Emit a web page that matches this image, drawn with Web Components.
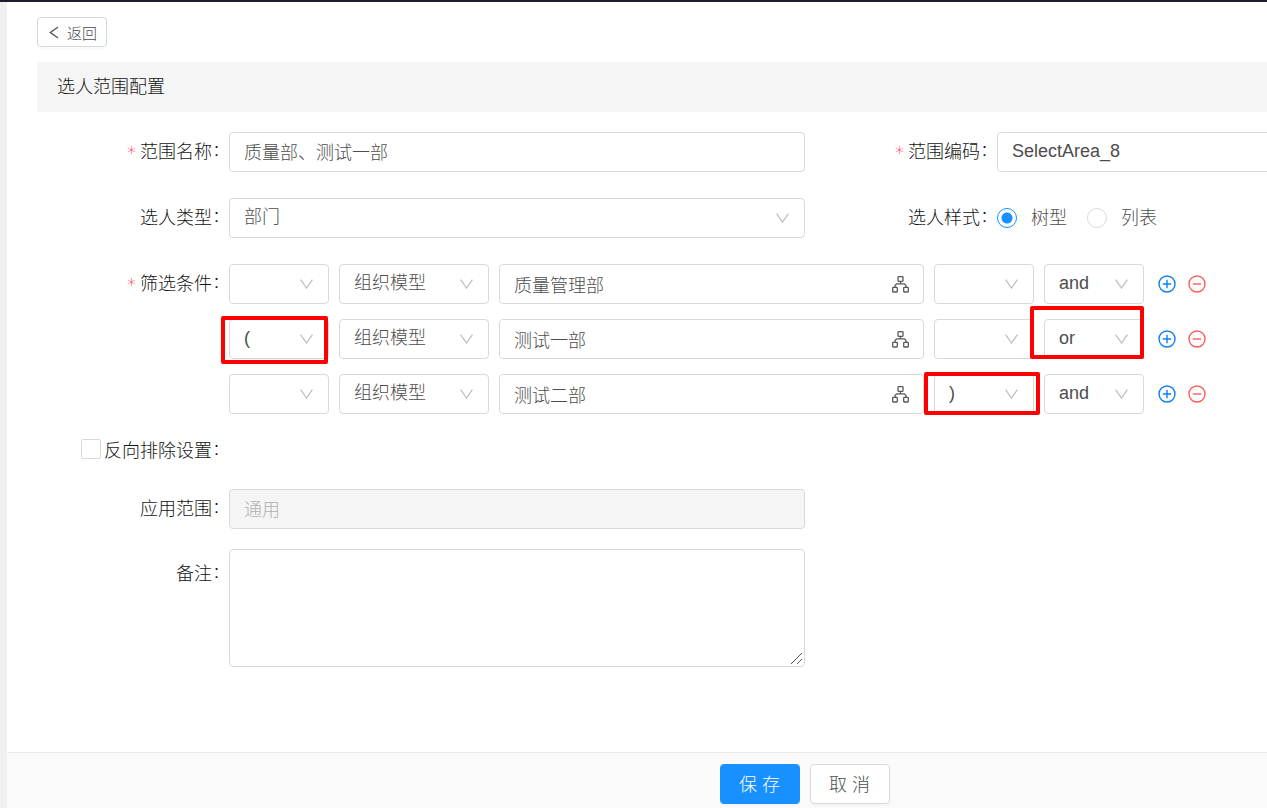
<!DOCTYPE html>
<html lang="zh-CN">
<head>
<meta charset="utf-8">
<meta name="viewport" content="width=device-width, initial-scale=1">
<title>选人范围配置</title>
<style>
  body {
    margin: 0;
    font-family: "Liberation Sans", "Noto Sans CJK SC", sans-serif;
    font-size: 18px;
    font-weight: 300;
    color: #141414;
    background: #fff;
  }
</style>
</head>
<body>
<range-page>
  <back-button slot="top" text="返回"></back-button>
  <section-title slot="top">选人范围配置</section-title>

  <form-row>
    <text-field label="范围名称" value="质量部、测试一部" required></text-field>
    <text-field label="范围编码" value="SelectArea_8" required bleed></text-field>
  </form-row>
  <form-row>
    <select-field label="选人类型" value="部门"></select-field>
    <radio-field label="选人样式" options="树型,列表"></radio-field>
  </form-row>
  <condition-list label="筛选条件" required>
    <condition-item model="组织模型" value="质量管理部" logic="and"></condition-item>
    <condition-item open="(" model="组织模型" value="测试一部" logic="or" mark="open logic"></condition-item>
    <condition-item model="组织模型" value="测试二部" close=")" logic="and" mark="close"></condition-item>
  </condition-list>
  <check-field label="反向排除设置"></check-field>
  <form-row>
    <text-field label="应用范围" value="通用" disabled></text-field>
  </form-row>
  <form-row>
    <area-field label="备注"></area-field>
  </form-row>

  <action-button slot="footer" primary>保 存</action-button>
  <action-button slot="footer">取 消</action-button>
</range-page>

<script>
const base = /* html */`
  <style>
    *, *::before, *::after {
      box-sizing: border-box;
    }

    :host {
      display: block;
      min-width: 0;
    }

    input, select, textarea, button {
      font: inherit;
      margin: 0;
    }

    .field {
      display: grid;
      grid-template-columns: 192px minmax(0, 1fr);
    }

    .label {
      display: flex;
      justify-content: flex-end;
      align-items: center;
      height: 36px;
      padding-right: 10px;
      white-space: nowrap;
    }

    .star {
      margin-right: 4px;
      padding-top: 6px;
      font-family: "DejaVu Sans", sans-serif;
      font-size: 18px;
      line-height: 18px;
      color: #f00;
    }

    .colon {
      margin-left: 2px;
    }

    .control {
      display: block;
      width: 100%;
      height: 40px;
      padding: 0 14px 2px;
      border: 1px solid #d9d9d9;
      border-radius: 4px;
      outline: none;
      color: #4d4d4d;
      background: #fff;
    }

    .control:disabled {
      color: #b0b0b0;
      background: #f5f5f5;
      opacity: 1;
    }

    select.control {
      appearance: none;
    }

    .select {
      position: relative;
    }

    .arrow {
      position: absolute;
      top: 15px;
      right: 16px;
      pointer-events: none;
    }
  </style>
`

const arrow = /* html */`
  <svg class="arrow" width="13" height="10" viewBox="0 0 13 10" fill="none" stroke="#bfbfbf" stroke-width="1.3">
    <path d="M.6.6 6.5 9 12.4.6"/>
  </svg>
`

const labelText = (el) => /* html */`
  ${el.hasAttribute('required') ? '<span class="star">*</span>' : ''}
  <span>${el.getAttribute('label')}</span><span class="colon">:</span>
`

const select = (value, name, id = '') => /* html */`
  <div class="select">
    <select class="control" ${id ? `id="${id}"` : `aria-label="${name}"`}>
      <option>${value}</option>
    </select>
    ${arrow}
  </div>
`

class BaseElement extends HTMLElement {
  constructor () {
    super()
    this.shadow = this.attachShadow({ mode: 'open' })
  }

  connectedCallback () {
    this.shadow.innerHTML = base + this.render()
  }
}

class RangePage extends BaseElement {
  render () {
    return /* html */`
      <style>
      :host {
        display: flex;
        flex-direction: column;
        min-height: 100vh;
        padding-left: 7px;
        border-top: 2px solid #1f1d2b;
        box-sizing: border-box;
        overflow-x: hidden;
        background: #f0f0f0;
      }

      main {
        flex: 1;
        padding: 15px 0 40px 30px;
        background: #fff;
      }

      form {
        padding-top: 20px;
      }

      footer {
        display: flex;
        justify-content: center;
        gap: 10px;
        padding: 11px 0 4px 335px;
        border-top: 1px solid #ebebeb;
        background: #fafafa;
      }
      </style>

      <main>
        <slot name="top"></slot>
        <form><slot></slot></form>
      </main>
      <footer><slot name="footer"></slot></footer>
    `
  }
}

class BackButton extends BaseElement {
  render () {
    return /* html */`
      <style>
      button {
        display: flex;
        align-items: center;
        gap: 8px;
        height: 30px;
        padding: 0 9px 0 11px;
        border: 1px solid #d9d9d9;
        border-radius: 4px;
        background: #fff;
        box-shadow: 0 2px 0 rgba(0, 0, 0, 0.02);
        color: #4d4d4d;
        font-size: 15px;
        cursor: pointer;
      }
      </style>

      <button type="button">
        <svg width="10" height="13" viewBox="0 0 10 13" fill="none" stroke="#595959" stroke-width="1.5">
          <path d="M9 1 1.4 6.5 9 12"/>
        </svg>
        <span>${this.getAttribute('text')}</span>
      </button>
    `
  }
}

class SectionTitle extends BaseElement {
  render () {
    return /* html */`
      <style>
      h1 {
        margin: 15px 0 0;
        padding-left: 20px;
        font: inherit;
        line-height: 50px;
        background: #f5f5f5;
      }
      </style>

      <h1><slot></slot></h1>
    `
  }
}

class FormRow extends BaseElement {
  render () {
    return /* html */`
      <style>
      :host {
        display: grid;
        grid-template-columns: minmax(0, 768px) minmax(0, 1fr);
        margin-bottom: 26px;
      }

      :host(:nth-last-of-type(-n+2)) {
        margin-bottom: 20px;
      }
      </style>

      <slot></slot>
    `
  }
}

class TextField extends BaseElement {
  render () {
    return /* html */`
      <style>
      /* the second column runs past the right edge of the window */
      :host([bleed]) {
        margin-right: -8px;
      }
      </style>

      <div class="field">
        <label class="label" for="control">${labelText(this)}</label>
        <input class="control" id="control" type="text" value="${this.getAttribute('value')}" ${this.hasAttribute('disabled') ? 'disabled' : ''}>
      </div>
    `
  }
}

class SelectField extends BaseElement {
  render () {
    return /* html */`
      <div class="field">
        <label class="label" for="control">${labelText(this)}</label>
        ${select(this.getAttribute('value'), '', 'control')}
      </div>
    `
  }
}

class AreaField extends BaseElement {
  render () {
    return /* html */`
      <style>
      .label {
        height: 46px;
      }

      textarea.control {
        height: 118px;
        padding: 8px 14px;
        resize: vertical;
      }

      textarea::-webkit-resizer {
        background:
          linear-gradient(135deg, transparent 47%, #595959 47%, #595959 53%, transparent 53%,
            transparent 73%, #595959 73%, #595959 79%, transparent 79%)
          2px 2px / 11px 11px no-repeat;
      }
      </style>

      <div class="field">
        <label class="label" for="control">${labelText(this)}</label>
        <textarea class="control" id="control"></textarea>
      </div>
    `
  }
}

class RadioField extends BaseElement {
  render () {
    const options = this.getAttribute('options').split(',')

    return /* html */`
      <style>
      .group {
        display: flex;
        align-items: center;
        gap: 20px;
        height: 40px;
        color: #4d4d4d;
      }

      .group label {
        display: flex;
        align-items: center;
        gap: 14px;
      }

      .group span {
        padding-bottom: 4px;
      }

      input {
        appearance: none;
        width: 20px;
        height: 20px;
        border: 1px solid #d9d9d9;
        border-radius: 50%;
      }

      input:checked {
        border-color: #1890ff;
        background: radial-gradient(circle, #1890ff 5px, #fff 6px);
      }
      </style>

      <div class="field" role="radiogroup" aria-labelledby="name">
        <div class="label" id="name">${labelText(this)}</div>
        <div class="group">
          ${options.map((option, i) => `
            <label><input type="radio" name="style" ${i === 0 ? 'checked' : ''}><span>${option}</span></label>
          `).join('')}
        </div>
      </div>
    `
  }
}

class CheckField extends BaseElement {
  render () {
    return /* html */`
      <style>
      :host {
        margin-bottom: 20px;
      }

      .label {
        height: 40px;
      }

      input {
        appearance: none;
        width: 20px;
        height: 20px;
        margin-right: 3px;
        border: 1px solid #d9d9d9;
        border-radius: 2px;
      }
      </style>

      <div class="field">
        <label class="label"><input type="checkbox">${labelText(this)}</label>
      </div>
    `
  }
}

class ConditionList extends BaseElement {
  render () {
    return /* html */`
      <style>
      .list {
        display: grid;
        gap: 15px;
        padding-right: 61px;
        margin-bottom: 15px;
      }
      </style>

      <div class="field" role="group" aria-labelledby="name">
        <div class="label" id="name">${labelText(this)}</div>
        <div class="list"><slot></slot></div>
      </div>
    `
  }
}

class ConditionItem extends BaseElement {
  render () {
    const marks = (this.getAttribute('mark') || '').split(' ')
    const value = (name) => this.getAttribute(name) || ''
    const cell = (name, title) => /* html */`
      <div class="cell">
        ${select(value(name), title)}
        ${marks.includes(name) ? `<span class="mark ${name}"></span>` : ''}
      </div>
    `

    return /* html */`
      <style>
      .item {
        display: grid;
        grid-template-columns: 100px 150px minmax(0, 1fr) 100px 100px auto;
        gap: 10px;
      }

      .cell {
        position: relative;
      }

      .picker {
        display: flex;
        align-items: center;
        height: 40px;
        padding-right: 14px;
        border: 1px solid #d9d9d9;
        border-radius: 4px;
      }

      .picker input {
        flex: 1;
        min-width: 0;
        height: 38px;
        padding-bottom: 0;
        border: none;
      }

      button {
        display: flex;
        padding: 0;
        border: none;
        background: none;
        cursor: pointer;
      }

      .actions {
        display: flex;
        align-items: center;
        gap: 12px;
        padding-left: 4px;
      }

      /* red frames drawn over the cells */
      .mark {
        position: absolute;
        z-index: 1;
        border: 4px solid #f00;
        border-radius: 2px;
        pointer-events: none;
      }

      .mark.open {
        inset: -3px 1px -5px -8px;
      }

      .mark.logic {
        inset: -13px 0 0 -14px;
      }

      .mark.close {
        inset: -2px -6px -1px -10px;
      }
      </style>

      <div class="item">
        ${cell('open', '左括号')}
        ${cell('model', '模型')}
        <div class="picker">
          <input class="control" type="text" aria-label="部门" value="${value('value')}">
          <button type="button" aria-label="选择">
            <svg width="17" height="17" viewBox="0 0 17 17" fill="none" stroke="#595959" stroke-width="1.3">
              <rect x="6" y=".7" width="5" height="4.6" rx=".5"/>
              <rect x=".7" y="11.4" width="4.6" height="4.6" rx=".5"/>
              <rect x="11.7" y="11.4" width="4.6" height="4.6" rx=".5"/>
              <path d="M8.5 5.4v2.4M3 11.4V9.6l1.6-1.7h7.8L14 9.6v1.8"/>
            </svg>
          </button>
        </div>
        ${cell('close', '右括号')}
        ${cell('logic', '逻辑')}
        <div class="actions">
          <button type="button" aria-label="添加">
            <svg width="18" height="18" viewBox="0 0 18 18" fill="none" stroke="#1080f0" stroke-width="1.4">
              <circle cx="9" cy="9" r="8"/>
              <path d="M4.8 9h8.4M9 4.8v8.4"/>
            </svg>
          </button>
          <button type="button" aria-label="删除">
            <svg width="18" height="18" viewBox="0 0 18 18" fill="none" stroke="#ff5c5c" stroke-width="1.4">
              <circle cx="9" cy="9" r="8"/>
              <path d="M4.8 9h8.4"/>
            </svg>
          </button>
        </div>
      </div>
    `
  }
}

class ActionButton extends BaseElement {
  render () {
    return /* html */`
      <style>
      button {
        height: 40px;
        min-width: 80px;
        padding: 0 18px 2px;
        border: 1px solid #d9d9d9;
        border-radius: 4px;
        color: #4d4d4d;
        background: #fff;
        box-shadow: 0 2px 0 rgba(0, 0, 0, 0.02);
        cursor: pointer;
      }

      :host([primary]) button {
        border-color: #1890ff;
        color: #fff;
        background: #1890ff;
      }
      </style>

      <button type="button"><slot></slot></button>
    `
  }
}

customElements.define('range-page', RangePage)
customElements.define('back-button', BackButton)
customElements.define('section-title', SectionTitle)
customElements.define('form-row', FormRow)
customElements.define('text-field', TextField)
customElements.define('select-field', SelectField)
customElements.define('area-field', AreaField)
customElements.define('radio-field', RadioField)
customElements.define('check-field', CheckField)
customElements.define('condition-list', ConditionList)
customElements.define('condition-item', ConditionItem)
customElements.define('action-button', ActionButton)
</script>
</body>
</html>
